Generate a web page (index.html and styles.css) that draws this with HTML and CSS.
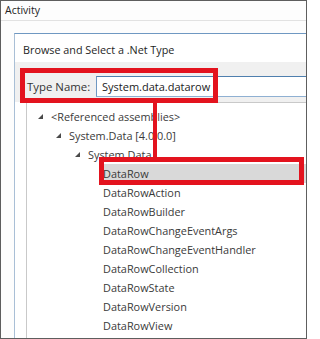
FILE: index.html
```html
<!DOCTYPE html>
<html>
<head>
<meta charset="utf-8">
<link rel="stylesheet" href="styles.css">
</head>
<body>
<div class="window">
  <div class="titlebar">Activity</div>
  <div class="content">
    <div class="dialog">
      <div class="dialog-title">Browse and Select a .Net Type</div>
      <div class="type-row">
        <span class="type-label">Type Name:</span>
        <div class="type-input">System.data.datarow</div>
      </div>
      <div class="tree">
        <div class="row lvl0"><span class="arrow"></span><span class="txt">&lt;Referenced assemblies&gt;</span></div>
        <div class="row lvl1"><span class="arrow"></span><span class="txt">System.Data [4.0.0.0]</span></div>
        <div class="row lvl2"><span class="arrow"></span><span class="txt">System.Data</span></div>
        <div class="row lvl3 selected"><span class="txt">DataRow</span></div>
        <div class="row lvl3"><span class="txt">DataRowAction</span></div>
        <div class="row lvl3"><span class="txt">DataRowBuilder</span></div>
        <div class="row lvl3"><span class="txt">DataRowChangeEventArgs</span></div>
        <div class="row lvl3"><span class="txt">DataRowChangeEventHandler</span></div>
        <div class="row lvl3"><span class="txt">DataRowCollection</span></div>
        <div class="row lvl3"><span class="txt">DataRowState</span></div>
        <div class="row lvl3"><span class="txt">DataRowVersion</span></div>
        <div class="row lvl3"><span class="txt">DataRowView</span></div>
      </div>
    </div>
  </div>
  <div class="mark mark-input"></div>
  <div class="mark mark-link"></div>
  <div class="mark mark-row"></div>
</div>
</body>
</html>
```

FILE: styles.css
```css
html, body {
  margin: 0;
  padding: 0;
  background: #ffffff;
}
.window {
  position: relative;
  width: 307px;
  height: 339px;
  box-sizing: border-box;
  border: 1px solid #5e5e5e;
  background: #fdfdfd;
  overflow: hidden;
  font-family: "Open Sans", "Noto Sans", sans-serif;
  color: #2b2b2b;
}
.titlebar {
  height: 19px;
  padding-left: 4px;
  font-size: 10.5px;
  line-height: 18px;
  color: #222;
  border-bottom: 1px solid #e2e2e2;
}
.content {
  padding: 12px 0 0 13px;
}
.dialog {
  border-top: 1px solid #6f98c2;
  border-left: 1px solid #a9bfd6;
  margin-right: -20px;
  background: #ffffff;
  height: 400px;
}
.dialog-title {
  height: 28px;
  padding-left: 8px;
  font-size: 10.8px;
  line-height: 32px;
  color: #1e1e1e;
}
.type-row {
  display: flex;
  align-items: flex-end;
  background: #f0f0f0;
  height: 40px;
  box-sizing: border-box;
  padding: 0 0 5px 12px;
}
.type-label {
  font-size: 11.4px;
  line-height: 21px;
  width: 69px;
  color: #333;
}
.type-input {
  flex: 1;
  height: 21px;
  box-sizing: border-box;
  border-top: 1px solid #4f7fae;
  border-bottom: 1px solid #8fb0d2;
  border-left: 1px solid #6f98c2;
  background: #ffffff;
  font-size: 11px;
  line-height: 19px;
  padding-left: 5px;
  color: #222;
}
.tree {
  margin-left: 11px;
  border-top: 1px solid #c9c9c9;
  border-left: 1px solid #c9c9c9;
  background: #ffffff;
  padding-top: 4px;
  height: 300px;
}
.row {
  display: flex;
  align-items: center;
  height: 19px;
  font-size: 10.9px;
  color: #3a3a3a;
}
.lvl0 { padding-left: 11px; }
.lvl1 { padding-left: 29px; }
.lvl2 { padding-left: 48px; }
.lvl3 { padding-left: 76px; }
.arrow {
  width: 0;
  height: 0;
  border-left: 5px solid transparent;
  border-bottom: 5px solid #4a4a4a;
  margin-right: 8px;
}
.row.selected {
  margin-left: 75px;
  padding-left: 1px;
  background: #d9d9d9;
}
.txt {
  white-space: nowrap;
}
.mark {
  position: absolute;
  box-sizing: border-box;
}
.mark-input {
  left: 19px;
  top: 67px;
  width: 198px;
  height: 35px;
  border: 5px solid #e3131e;
}
.mark-link {
  left: 152px;
  top: 101px;
  width: 4px;
  height: 57px;
  background: #e3131e;
}
.mark-row {
  left: 98px;
  top: 156px;
  width: 205px;
  height: 28px;
  border: 5px solid #e3131e;
}
```
